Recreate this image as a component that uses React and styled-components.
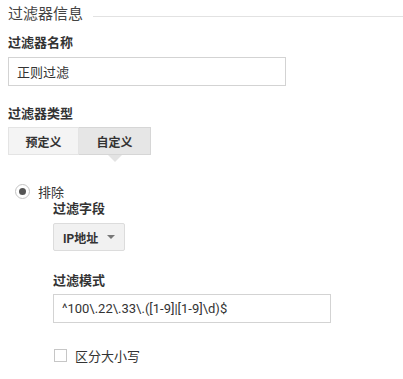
import React, { useState } from 'react';
import styled, { createGlobalStyle } from 'styled-components';

const GlobalStyle = createGlobalStyle`
  body {
    margin: 0;
    background: #fff;
    font-family: Roboto, "Noto Sans CJK SC", sans-serif;
    color: #333;
  }
`;

const Page = styled.div`
  padding: 4px 0 0 8px;
  width: 395px;
`;

const SectionHeader = styled.div`
  display: flex;
  align-items: center;
  gap: 10px;
  height: 20px;
`;

const SectionTitle = styled.h2`
  margin: 0;
  font-size: 15px;
  font-weight: 400;
  line-height: 20px;
  color: #444;
`;

const Rule = styled.div`
  flex: 1;
  height: 1px;
  margin-top: 4px;
  background: #e2e2e2;
`;

const Label = styled.div`
  margin-top: ${p => p.gap || 0}px;
  font-size: 13px;
  font-weight: 700;
  line-height: 18px;
  color: #333;
`;

const TextInput = styled.input`
  display: block;
  box-sizing: border-box;
  width: 278px;
  height: 29px;
  margin-top: ${p => p.gap || 5}px;
  padding: 0 8px;
  border: 1px solid #d3d3d3;
  border-radius: 0;
  outline: none;
  font-family: Roboto, "Noto Sans CJK SC", sans-serif;
  font-size: 13px;
  color: #333;
  background: #fff;
`;

const Tabs = styled.div`
  display: flex;
  margin-top: 4px;
`;

const Tab = styled.button`
  position: relative;
  width: ${p => p.w}px;
  height: 28px;
  padding: 0;
  border: 1px solid ${p => (p.active ? '#d6d6d6' : '#e4e4e4')};
  border-left-width: ${p => (p.first ? 1 : 0)}px;
  background: ${p => (p.active ? '#e6e6e6' : '#f4f4f4')};
  font-family: Roboto, "Noto Sans CJK SC", sans-serif;
  font-size: 12px;
  font-weight: 700;
  color: #333;
  cursor: pointer;

  &::after {
    content: '';
    display: ${p => (p.active ? 'block' : 'none')};
    position: absolute;
    left: 50%;
    bottom: -8px;
    margin-left: -7px;
    border-left: 7px solid transparent;
    border-right: 7px solid transparent;
    border-top: 7px solid #e3e3e3;
  }
`;

const RadioRow = styled.label`
  display: flex;
  align-items: center;
  gap: 8px;
  margin-top: 27px;
  padding-left: 7px;
  height: 18px;
  font-size: 13px;
  color: #333;
`;

const RadioCircle = styled.span`
  display: flex;
  align-items: center;
  justify-content: center;
  box-sizing: border-box;
  width: 15px;
  height: 15px;
  border: 1px solid #c4c4c4;
  border-radius: 50%;
  background: #fff;

  &::before {
    content: '';
    width: 7px;
    height: 7px;
    border-radius: 50%;
    background: #555;
  }
`;

const Nested = styled.div`
  padding-left: 45px;
`;

const Select = styled.div`
  display: flex;
  align-items: center;
  justify-content: space-between;
  box-sizing: border-box;
  width: 72px;
  height: 28px;
  margin-top: 5px;
  padding: 0 9px;
  border: 1px solid #dcdcdc;
  border-radius: 2px;
  background: #f1f1f1;
  font-size: 12px;
  font-weight: 700;
  color: #333;
`;

const Caret = styled.span`
  width: 0;
  height: 0;
  border-left: 4px solid transparent;
  border-right: 4px solid transparent;
  border-top: 4px solid #777;
`;

const CheckRow = styled.label`
  display: flex;
  align-items: center;
  gap: 8px;
  margin-top: 23px;
  padding-left: 1px;
  font-size: 13px;
  color: #333;
`;

const CheckBox = styled.span`
  box-sizing: border-box;
  width: 13px;
  height: 13px;
  border: 1px solid #c6c6c6;
  background: #fff;
`;

const App = () => {
  const [name, setName] = useState('正则过滤');
  const [pattern, setPattern] = useState('^100\\.22\\.33\\.([1-9]|[1-9]\\d)$');

  return (
    <Page>
      <GlobalStyle />
      <SectionHeader>
        <SectionTitle>过滤器信息</SectionTitle>
        <Rule />
      </SectionHeader>

      <Label gap={10}>过滤器名称</Label>
      <TextInput value={name} onChange={e => setName(e.target.value)} />

      <Label gap={19}>过滤器类型</Label>
      <Tabs>
        <Tab w={71} first>预定义</Tab>
        <Tab w={72} active>自定义</Tab>
      </Tabs>

      <RadioRow>
        <RadioCircle />
        排除
      </RadioRow>

      <Nested>
        <Label>过滤字段</Label>
        <Select>
          IP地址
          <Caret />
        </Select>

        <Label gap={21}>过滤模式</Label>
        <TextInput gap={4} value={pattern} onChange={e => setPattern(e.target.value)} />

        <CheckRow>
          <CheckBox />
          区分大小写
        </CheckRow>
      </Nested>
    </Page>
  );
};

export default App;
